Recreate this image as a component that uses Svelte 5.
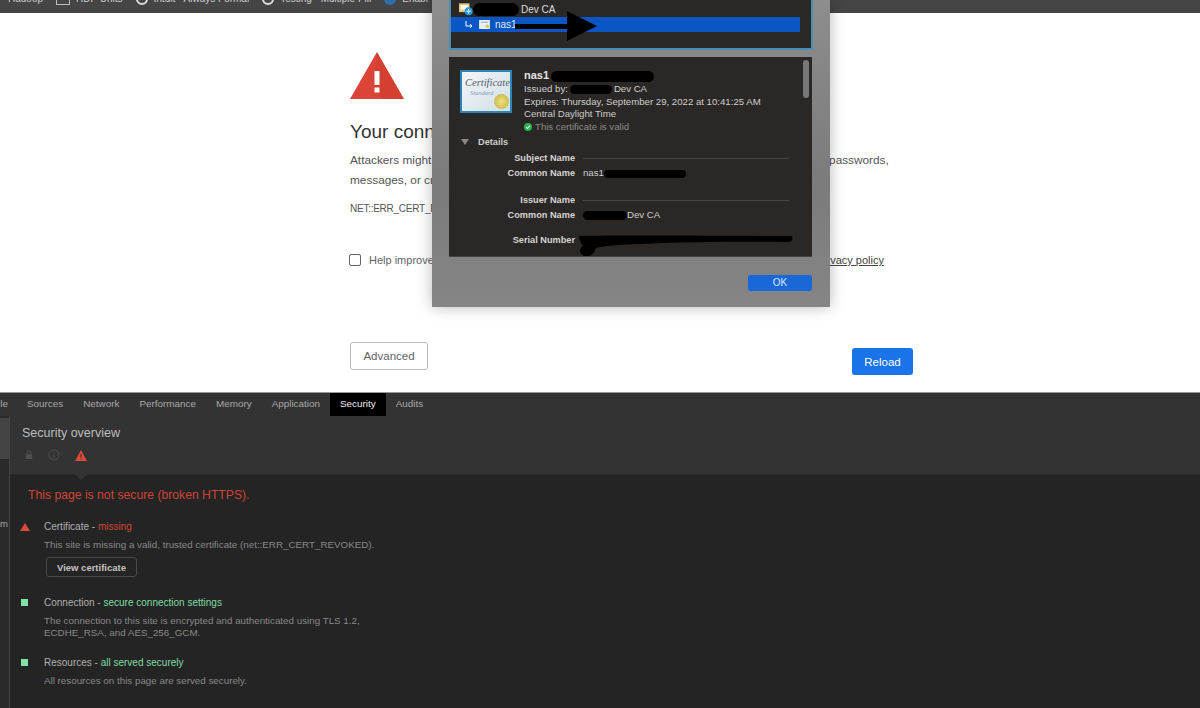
<script>
  const tabs = [
    { label: 'le' }, { label: 'Sources' }, { label: 'Network' }, { label: 'Performance' },
    { label: 'Memory' }, { label: 'Application' }, { label: 'Security', active: true }, { label: 'Audits' }
  ];
  const marks = [
    { label: 'Hadoop', icon: 'none' }, { label: 'HDP Units', icon: 'doc' },
    { label: 'Intuit - Always Formal', icon: 'ring' }, { label: 'Testing - Multiple Pill', icon: 'ring' },
    { label: 'Enabl', icon: 'blue' }
  ];
</script>

<div class="screen">
  <header class="bookmarks">
    {#each marks as m}
      <span class="mark">
        {#if m.icon !== 'none'}<i class="mi {m.icon}"></i>{/if}{m.label}
      </span>
    {/each}
  </header>

  <main class="page">
    <div class="interstitial">
      <svg class="warn" viewBox="0 0 54 47" width="54" height="47"><path d="M27 0 54 47H0Z" fill="#db4437"/><path d="M27 0 54 47H34L24 35Z" fill="#c53929" opacity=".35"/><rect x="24.500" y="19" width="5" height="14" fill="#fff"/><rect x="24.500" y="35.500" width="5" height="5" fill="#fff"/></svg>
      <h1>Your connection is not private</h1>
      <p class="body">Attackers might be trying to steal your information from nas1.dev.example.net (for example, passwords,<br/>messages, or credit cards).</p>
      <p class="code">NET::ERR_CERT_REVOKED</p>
      <label class="help"><span class="box"></span><span class="help-text">Help improve Chrome security by sending some system information.</span><u>Privacy policy</u></label>
      <div class="actions">
        <button class="adv">Advanced</button>
        <button class="reload">Reload</button>
      </div>
    </div>

    <section class="dialog">
      <div class="tree">
        <div class="row root">
          <svg class="ci" viewBox="0 0 16 14" width="14" height="13"><rect x="0" y="0" width="12" height="10" fill="#efc97a"/><rect x="2" y="2" width="8" height="5" fill="#fff"/><circle cx="11" cy="9" r="4.500" fill="#2b9be0"/><path d="M11 6.500v5M8.500 9h5" stroke="#fff"/></svg>
          <b class="ink i1"></b><span class="tn">Dev CA</span>
        </div>
        <div class="row sel">
          <svg class="el" viewBox="0 0 8 8" width="8" height="8"><path d="M1 0v5h6M5 3l2 2-2 2" fill="none" stroke="#fff"/></svg>
          <svg class="ci2" viewBox="0 0 12 10" width="11" height="9"><rect width="12" height="10" fill="#e9eef3"/><rect x="2" y="2" width="8" height="1" fill="#7ea3c7"/><circle cx="9" cy="7" r="2" fill="#e6c44d"/></svg>
          <span class="tn">nas1</span>
          <svg class="arrow" viewBox="0 0 82 30" width="82" height="30"><path d="M0 13H52V0L82 15 52 30V18H0Z" fill="#000"/></svg>
        </div>
      </div>
      <div class="grip"></div>
      <div class="detail">
        <div class="head">
          <div class="cert">
            <span class="c1">Certificate</span><span class="c2">Standard</span><i class="seal"></i>
          </div>
          <div class="meta">
            <div class="name">nas1<b class="ink i2"></b></div>
            <div>Issued by:<b class="ink i3"></b>Dev CA</div>
            <div>Expires: Thursday, September 29, 2022 at 10:41:25 AM</div>
            <div>Central Daylight Time</div>
            <div class="valid"><svg viewBox="0 0 10 10" width="8" height="8"><circle cx="5" cy="5" r="5" fill="#28b44b"/><path d="M2.500 5.200 4.300 7l3.200-3.800" fill="none" stroke="#fff" stroke-width="1.300"/></svg>This certificate is valid</div>
          </div>
        </div>
        <div class="details"><i class="tri"></i><b>Details</b></div>
        <div class="kv heading s1"><b>Subject Name</b><em></em></div>
        <div class="kv"><b>Common Name</b><span>nas1<b class="ink i4"></b></span></div>
        <div class="kv heading s2"><b>Issuer Name</b><em></em></div>
        <div class="kv"><b>Common Name</b><span><b class="ink i5"></b>Dev CA</span></div>
        <div class="kv serial"><b>Serial Number</b><span class="scribble"><svg viewBox="0 0 215 26" width="215" height="26"><path d="M0 3C60 2 150 3 213 3 214 6 214 9 208 9 150 8 90 9 40 12 25 13 18 14 16 16 16 21 9 25 5 23 0 21 0 15 4 13 2 10 0 7 0 3Z" fill="#000"/></svg></span></div>
        <div class="thumb"></div>
      </div>
      <div class="ok-row"><button class="ok">OK</button></div>
    </section>
  </main>

  <section class="devtools">
    <nav class="tabs">
      {#each tabs as t}
        <span class="tab" class:active={t.active}>{t.label}</span>
      {/each}
    </nav>
    <div class="panes">
      <aside class="side">
        <div class="side-sel"></div>
        <span class="m">m</span>
      </aside>
      <div class="main">
        <div class="ov">
          <h2>Security overview</h2>
          <div class="states">
            <svg viewBox="0 0 10 12" width="8" height="10"><path d="M2.500 5V3.500a2.500 2.500 0 0 1 5 0V5" fill="none" stroke="#505050" stroke-width="1.300"/><rect x="1" y="5" width="8" height="6" fill="#505050"/></svg>
            <svg viewBox="0 0 12 12" width="12" height="12"><circle cx="6" cy="6" r="5" fill="none" stroke="#505050"/><path d="M6 3v1M6 5.500V9" stroke="#505050"/></svg>
            <svg viewBox="0 0 12 11" width="12" height="11"><path d="M6 0 12 11H0Z" fill="#dd4a3c"/><path d="M6 4v3.500M6 8.500v1" stroke="#333" stroke-width="1.100"/></svg>
          </div>
        </div>
        <div class="report">
          <i class="notch"></i>
          <h3>This page is not secure (broken HTTPS).</h3>
          <div class="item">
            <i class="tri-red"></i>
            <div class="title">Certificate - <span class="red">missing</span></div>
            <div class="desc">This site is missing a valid, trusted certificate (net::ERR_CERT_REVOKED).</div>
            <button class="view">View certificate</button>
          </div>
          <div class="item second">
            <i class="sq"></i>
            <div class="title">Connection - <span class="green">secure connection settings</span></div>
            <div class="desc">The connection to this site is encrypted and authenticated using TLS 1.2,<br/>ECDHE_RSA, and AES_256_GCM.</div>
          </div>
          <div class="item third">
            <i class="sq"></i>
            <div class="title">Resources - <span class="green">all served securely</span></div>
            <div class="desc">All resources on this page are served securely.</div>
          </div>
        </div>
      </div>
    </div>
  </section>
</div>

<style>
  :global(body) { margin: 0; background: #fff; }
  .screen { width: 1200px; height: 708px; overflow: hidden; display: flex; flex-direction: column; font-family: "Liberation Sans", Arial, sans-serif; position: relative; }
  .bookmarks { height: 13px; flex: none; background: #454545; display: flex; align-items: flex-start; overflow: hidden; color: #cfcfcf; font-size: 10px; line-height: 11px; padding-left: 8px; gap: 13px; white-space: nowrap; }
  .mark { display: flex; align-items: center; gap: 6px; height: 11px; position: relative; top: -7px; flex: none; }
  .mi { width: 12px; height: 12px; display: block; flex: none; box-sizing: border-box; }
  .doc { border: 1px solid #bbb; width: 14px; }
  .ring { border: 2px solid #ddd; border-radius: 50%; }
  .blue { background: #2d6ea8; border-radius: 50%; }

  .page { flex: none; height: 379px; background: #fff; position: relative; }
  .interstitial { width: 564px; margin-left: 349px; padding-top: 39px; color: #5f6368; position: relative; height: 340px; box-sizing: border-box; }
  .warn { display: block; margin-left: 1px; }
  h1 { margin: 21px 0 0 1px; font-size: 19px; line-height: 24px; font-weight: 400; color: #333; white-space: nowrap; }
  .body { margin: 6px 0 0 1px; font-size: 11.800px; line-height: 20px; color: #555; white-space: nowrap; width: 540px; }
  .code { margin: 11px 0 0 1px; font-size: 10px; letter-spacing: -.25px; line-height: 16px; color: #555; }
  .help { display: flex; align-items: center; gap: 8px; margin-top: 36px; font-size: 11px; line-height: 14px; color: #5f6368; white-space: nowrap; width: 535px; }
  .help-text { flex: 1; }
  .help u { color: #444; }
  .box { width: 12px; height: 12px; border: 1px solid #666; border-radius: 2px; box-sizing: border-box; flex: none; }
  .actions { display: flex; justify-content: space-between; align-items: flex-end; margin-top: 75px; margin-left: 1px; height: 32px; }
  button { font-family: inherit; cursor: default; }
  .adv { width: 78px; height: 28px; background: #fff; border: 1px solid #bbb; border-radius: 3px; color: #5f6368; font-size: 11.500px; padding: 0; position: relative; top: -4px; }
  .reload { width: 61px; height: 27px; background: #1a73e8; border: 0; border-radius: 3px; color: #fff; font-size: 11.500px; padding: 0; position: relative; top: 1px; }

  .dialog { position: absolute; left: 432px; top: -13px; width: 398px; height: 307px; background: linear-gradient(#8d8d8d, #7b7b7b 60%, #858585); box-shadow: 0 0 14px rgba(0,0,0,.28); box-sizing: border-box; padding: 0 17px; color: #ddd; }
  .tree { height: 50px; box-sizing: border-box; background: #2a2827; border: 2px solid #4a8db6; border-top: 0; padding-top: 2px; width: 364px; position: relative; }
  .row { height: 15px; display: flex; align-items: center; font-size: 10px; position: relative; }
  .root { padding-left: 8px; color: #ddd; }
  .tn { white-space: nowrap; }
  .root .tn { margin-left: 2px; }
  .sel { background: #0a56c5; margin: 0 11px 0 0; padding-left: 14px; color: #dfe8f8; }
  .el { margin-right: 6px; }
  .ci2 { margin-right: 5px; }
  .arrow { position: absolute; left: 64px; top: -6px; }
  .ink { display: inline-block; background: #000; border-radius: 8px; vertical-align: middle; }
  .i1 { width: 46px; height: 13px; }
  .grip { height: 7px; }
  .detail { height: 200px; background: #2a2827; width: 363px; position: relative; overflow: hidden; font-size: 9.650px; line-height: 12.500px; border-bottom: 1px solid #444; box-sizing: border-box; }
  .head { display: flex; padding: 13px 0 0 11px; }
  .cert { width: 52px; height: 43px; background: linear-gradient(135deg,#f3f5f5,#cfe0ea); border: 2px solid #2c84b8; box-sizing: border-box; position: relative; flex: none; color: #57616b; font-family: "Liberation Serif", serif; font-style: italic; overflow: hidden; }
  .c1 { position: absolute; left: 3px; top: 5px; font-size: 10.500px; line-height: 11px; }
  .c2 { position: absolute; left: 8px; top: 17px; font-size: 6.500px; line-height: 8px; color: #7f9fbe; }
  .seal { position: absolute; right: 1px; bottom: 2px; width: 15px; height: 15px; border-radius: 50%; background: radial-gradient(#eee27a,#bfae3e); }
  .meta { margin: -2px 0 0 12px; white-space: nowrap; color: #cfcdcb; }
  .name { font-size: 11px; font-weight: 700; color: #e6e4e2; line-height: 15px; position: relative; }
  .i2 { width: 103px; height: 11px; margin-left: 2px; }
  .i3 { width: 42px; height: 9px; margin: 0 2px; }
  .valid { color: #8a8a88; display: flex; align-items: center; gap: 3px; }
  .details { display: flex; align-items: center; gap: 9px; margin: 3px 0 0 12px; height: 12px; }
  .details b { color: #cfcdcb; font-size: 9.200px; }
  .tri { border: 4px solid transparent; border-top: 6px solid #8a8886; border-bottom: 0; width: 0; height: 0; }
  .kv { display: flex; align-items: center; height: 15px; white-space: nowrap; color: #cfcdcb; }
  .kv > b:first-child { width: 126px; text-align: right; color: #d5d3d1; margin-right: 8px; flex: none; font-size: 9.200px; }
  .kv em { flex: none; width: 206px; height: 1px; background: #444; }
  .s1 { margin-top: 3px; }
  .s2 { margin-top: 12px; }
  .i4 { width: 82px; height: 8px; }
  .i5 { width: 44px; height: 9px; }
  .serial { margin-top: 10px; position: relative; }
  .scribble { position: absolute; left: 130px; top: 0; }
  .thumb { position: absolute; right: 3px; top: 3px; width: 6px; height: 38px; border-radius: 3px; background: #777; }
  .ok-row { display: flex; justify-content: flex-end; padding-top: 18px; width: 363px; }
  .ok { width: 64px; height: 16px; border: 0; padding: 0; border-radius: 2px; background: #1a68d8; color: #dbe7fa; font-size: 10px; line-height: 16px; }

  .devtools { flex: 1; background: #242424; display: flex; flex-direction: column; color: #bbb; min-height: 0; }
  .tabs { flex: none; background: #333; display: flex; border-top: 1px solid #999; box-sizing: border-box; font-size: 9.900px; color: #a9a9a9; align-items: stretch; height: 24px; }
  .tab { padding: 0 10px; line-height: 21px; }
  .tab:first-child { padding: 0; width: 8px; margin-right: 9px; overflow: hidden; direction: rtl; }
  .tab.active { background: #000; color: #eee; }
  .panes { flex: 1; display: flex; min-height: 0; }
  .side { width: 9px; flex: none; background: #2a2a2a; border-right: 1px solid #444; position: relative; }
  .side-sel { height: 41px; margin-top: 2px; background: #444; }
  .m { position: absolute; left: 0; top: 102px; font-size: 9.500px; color: #aaa; }
  .main { flex: 1; display: flex; flex-direction: column; }
  .ov { height: 59px; flex: none; background: #333; padding: 9px 0 0 12px; box-sizing: border-box; border-bottom: 1px solid #2a2a2a; }
  h2 { margin: 0; font-size: 12.500px; line-height: 16px; font-weight: 400; color: #bdbdbd; }
  .states { display: flex; align-items: center; gap: 15px; margin-top: 8px; padding-left: 3px; }
  .report { flex: 1; position: relative; padding: 12px 0 0 18px; background: #242424; }
  .notch { position: absolute; left: 66px; top: -6px; width: 10px; height: 10px; background: #333; transform: rotate(45deg) scale(.9); }
  h3 { margin: 0; font-size: 12.200px; line-height: 17px; font-weight: 400; color: #cf4436; }
  .item { position: relative; padding-left: 16px; margin-top: 17px; }
  .second { margin-top: 20px; }
  .third { margin-top: 18px; }
  .title { font-size: 10px; line-height: 12px; color: #b0b0b0; }
  .desc { font-size: 9.800px; line-height: 12px; color: #888; margin-top: 6px; white-space: nowrap; }
  .red { color: #cf4436; }
  .green { color: #7fdca5; }
  .view { display: block; margin: 6px 0 0 2px; width: 91px; height: 20px; padding: 0; background: #242424; border: 1px solid #4a4a4a; border-radius: 3px; color: #c2c2c2; font-size: 9.500px; font-weight: 700; }
  .tri-red { position: absolute; left: -8px; top: 2px; width: 0; height: 0; border: 5px solid transparent; border-top: 0; border-bottom: 8px solid #dd4a3c; }
  .sq { position: absolute; left: -7px; top: 2px; width: 7px; height: 7px; background: #82e0aa; }
</style>
